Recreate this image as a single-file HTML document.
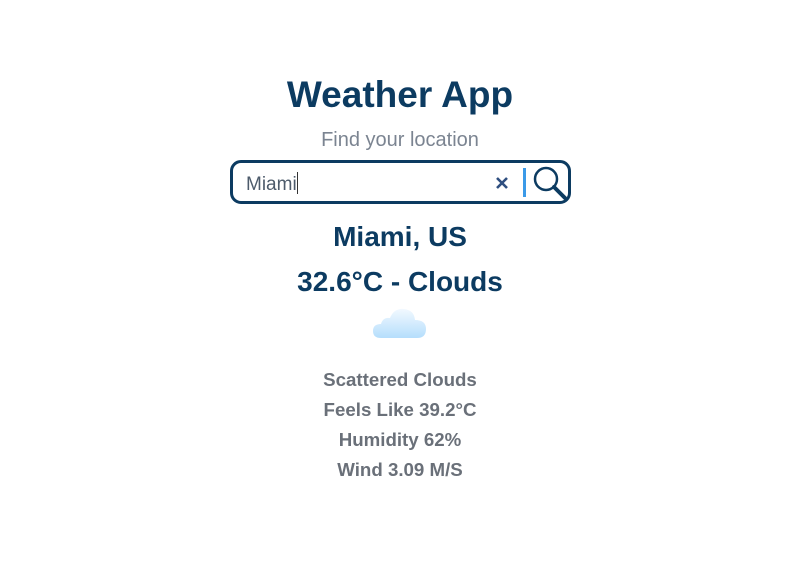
<!DOCTYPE html>
<html><head><meta charset="utf-8"><style>
body{margin:0;width:788px;height:574px;background:#fff;font-family:"Liberation Sans",sans-serif;position:relative;overflow:hidden}
.c{position:absolute;left:6px;width:788px;text-align:center;white-space:nowrap}
h1{margin:0;font-size:37px;color:#0c3b61;font-weight:bold}
.sub{font-size:20px;color:#7b8491}
.box{position:absolute;left:230px;top:160px;width:335px;height:38px;border:3px solid #0c3b61;border-radius:11px}
.box .t{position:absolute;left:13px;top:9px;font-size:19px;color:#4d5b6b}
.cur{display:inline-block;width:1px;height:22px;background:#333;vertical-align:-4px}
.big{font-size:28px;font-weight:bold;color:#0c3b61}
.d{font-size:18.7px;font-weight:bold;color:#6a7079}
</style></head><body>
<div class="c" style="top:74px"><h1>Weather App</h1></div>
<div class="c sub" style="top:129px">Find your location</div>
<div class="box"><span class="t">Miami<span class="cur"></span></span>
<svg style="position:absolute;left:262px;top:13px" width="14" height="14" viewBox="0 0 14 14"><path d="M2 2L12 12M12 2L2 12" stroke="#2f4f80" stroke-width="2.6"/></svg>
<div style="position:absolute;left:290px;top:5px;width:3px;height:29px;background:#3b9ae8"></div>
<svg style="position:absolute;left:299px;top:2px" width="36" height="36" viewBox="0 0 36 36"><circle cx="14" cy="14" r="11" fill="none" stroke="#0c3b61" stroke-width="2.5"/><path d="M22 22L33 33" stroke="#0c3b61" stroke-width="4" stroke-linecap="round"/></svg>
</div>
<div class="c big" style="top:221px">Miami, US</div>
<div class="c big" style="top:266px">32.6°C - Clouds</div>
<svg style="position:absolute;left:371px;top:304px" width="58" height="38" viewBox="0 0 58 38"><defs><linearGradient id="g" x1="0" y1="0" x2="0" y2="1"><stop offset="0" stop-color="#f2f9ff"/><stop offset="1" stop-color="#b5defc"/></linearGradient></defs><path d="M10 34 Q2 34 2 27 Q2 20 10 20 Q12 13 19 14 Q23 4 33 5 Q43 6 44 16 Q55 16 55 25 Q55 34 46 34 Z" fill="url(#g)"/></svg>
<div class="c d" style="top:369px">Scattered Clouds</div>
<div class="c d" style="top:399px">Feels Like 39.2°C</div>
<div class="c d" style="top:429px">Humidity 62%</div>
<div class="c d" style="top:459px">Wind 3.09 M/S</div>
</body></html>
